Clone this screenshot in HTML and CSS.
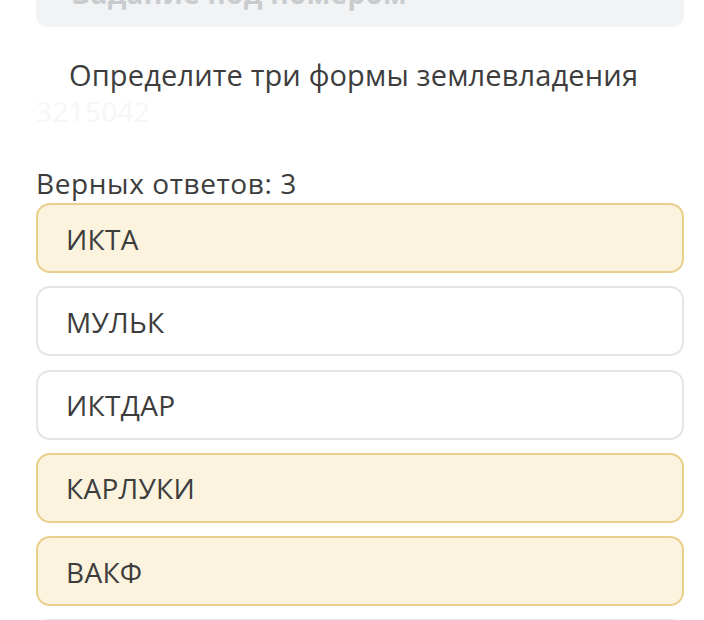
FILE: index.html
```html
<!DOCTYPE html>
<html lang="ru">
<head>
  <meta charset="UTF-8" />
  <meta name="viewport" content="width=device-width, initial-scale=1.0" />
  <title>Вопрос</title>
  <link rel="stylesheet" href="styles.css">
</head>
<body>
  <div class="page">
    <div class="task-head">
      <span class="task-title">Задание под номером</span>
    </div>

    <p class="question">Определите три формы землевладения</p>
    <div class="task-id">3215042</div>

    <div class="hint">Верных ответов: 3</div>

    <ul class="answers">
      <li class="answer selected">ИКТА</li>
      <li class="answer">МУЛЬК</li>
      <li class="answer">ИКТДАР</li>
      <li class="answer selected">КАРЛУКИ</li>
      <li class="answer selected">ВАКФ</li>
      <li class="answer">ИКТА-ДАР</li>
    </ul>
  </div>
</body>
</html>
```

FILE: styles.css
```css
body {
  margin: 0;
  font-family: 'Open Sans', 'Noto Sans', sans-serif;
  background: #ffffff;
  color: #3d3d3d;
  overflow: hidden;
}

.page {
  padding: 0 20px 0 36px;
  font-size: 28px;
  letter-spacing: 0.3px;
}

.task-head {
  background: #f1f3f4;
  border-radius: 0 0 12px 12px;
  height: 27px;
  padding-left: 36px;
  overflow: hidden;
}

.task-title {
  display: block;
  margin-top: -22px;
  font-weight: 700;
  line-height: 30px;
  color: #c9cccf;
}

.question {
  margin: 30px 0 0;
  padding-left: 33px;
  font-size: 29px;
  line-height: 36px;
  letter-spacing: 0.15px;
}

.task-id {
  line-height: 36px;
  color: #f6f6f6;
}

.hint {
  margin: 36px 0 2px;
  line-height: 36px;
  letter-spacing: 0.6px;
}

.answers {
  list-style: none;
  margin: 0;
  padding: 0;
  display: flex;
  flex-direction: column;
  gap: 13.3px;
}

.answer {
  box-sizing: border-box;
  height: 70px;
  display: flex;
  align-items: center;
  padding: 1px 0 0 28px;
  border: 2px solid #e2e6e8;
  border-radius: 14px;
  background: #ffffff;
}

.answer.selected {
  background: #fbf3de;
  border-color: #e9cf8c;
}
```
